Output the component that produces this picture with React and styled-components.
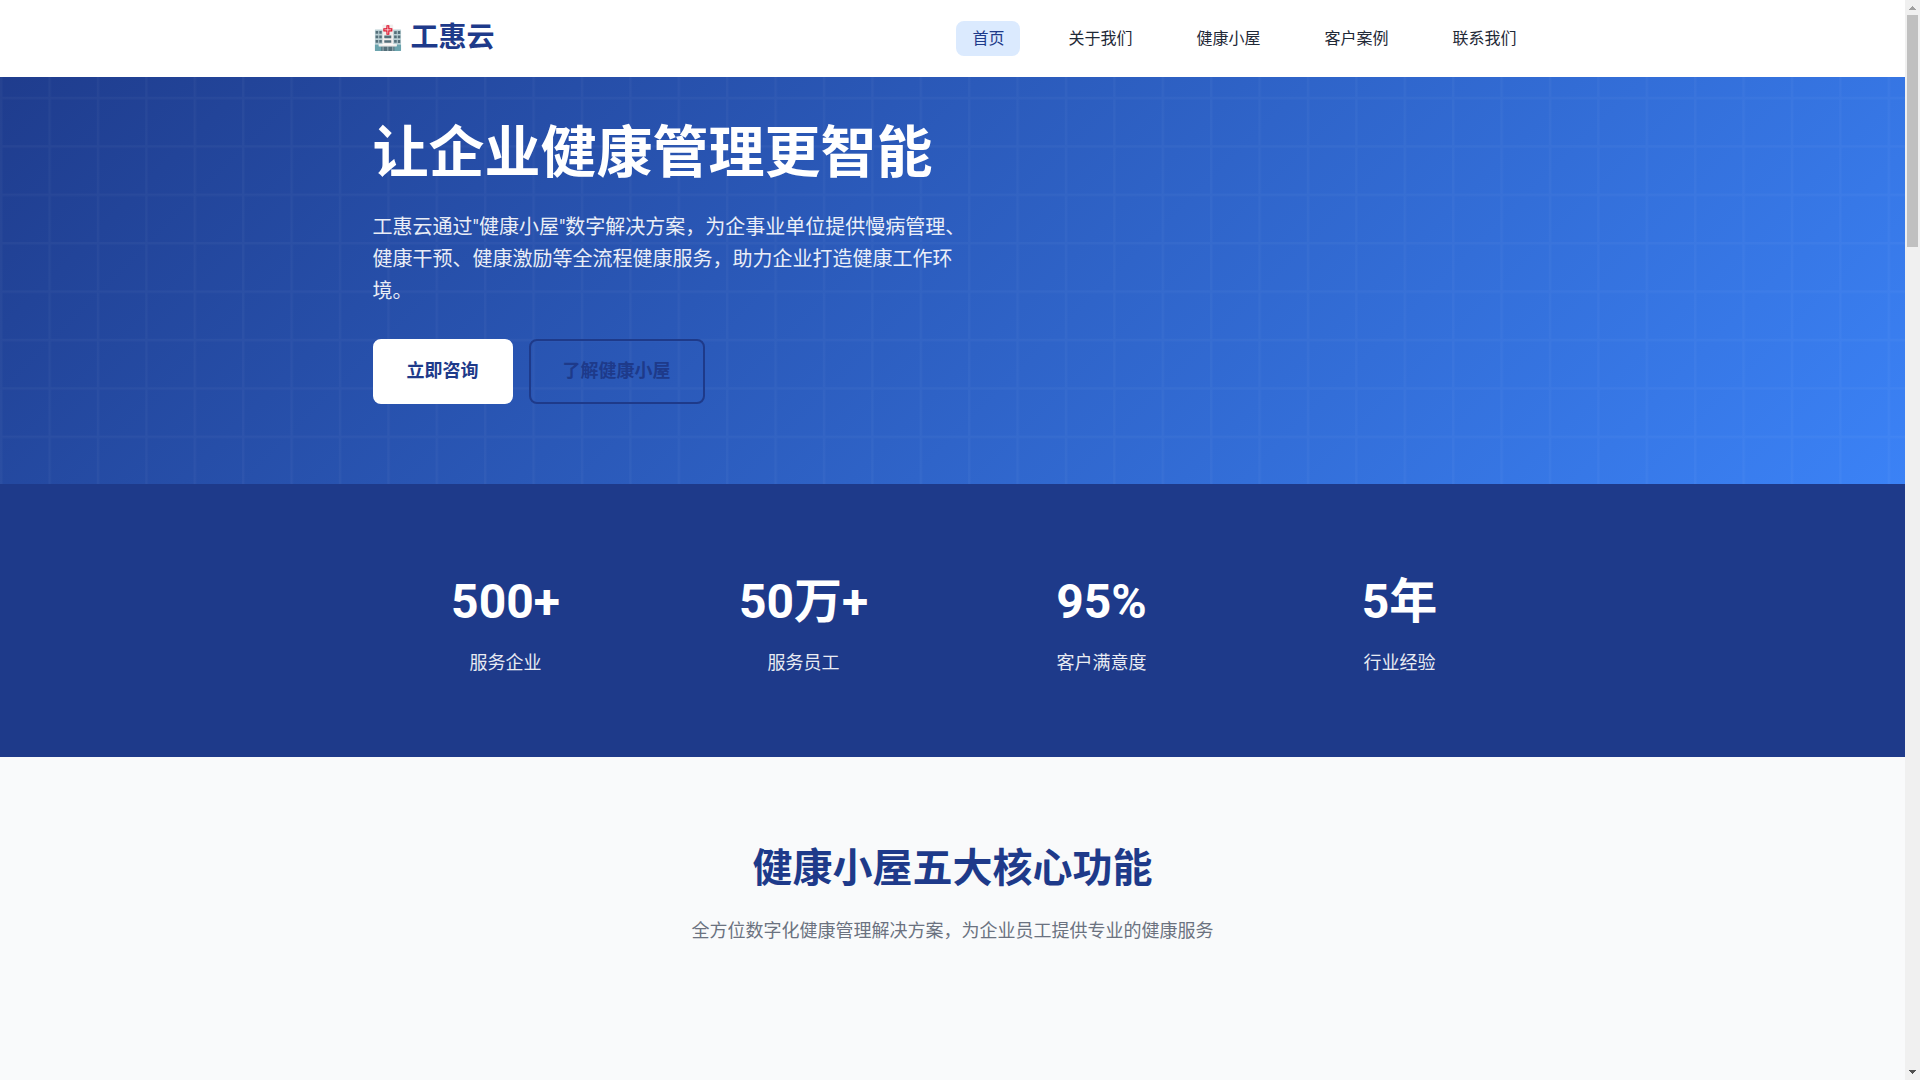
import React from "react";
import styled, { createGlobalStyle, css } from "styled-components";

const GlobalStyle = createGlobalStyle`
  *, *::before, *::after { box-sizing: border-box; }
  body {
    margin: 0;
    font-family: Roboto, "Noto Sans CJK SC", sans-serif;
    font-size: 16px;
    line-height: 1.6;
    color: #1f2937;
    background: #ffffff;
  }
  h1, h2, p, ul, dl, dd { margin: 0; padding: 0; }
`;

const navy = "#1e3a8a";

const gridTile = encodeURIComponent(
  `<svg xmlns="http://www.w3.org/2000/svg" viewBox="0 0 100 100"><defs><pattern id="grid" width="10" height="10" patternUnits="userSpaceOnUse"><path d="M 10 0 L 0 0 0 10" fill="none" stroke="rgba(255,255,255,0.1)" stroke-width="1"/></pattern></defs><rect width="100" height="100" fill="url(#grid)"/></svg>`
);

const Frame = styled.div`
  display: flex;
  min-height: 100vh;
`;

const Page = styled.div`
  flex: 1;
  min-width: 0;
  display: flex;
  flex-direction: column;
`;

const Container = styled.div`
  width: 100%;
  max-width: 1200px;
  margin: 0 auto;
  padding: 0 20px;
`;

const Header = styled.header`
  position: sticky;
  top: 0;
  z-index: 10;
  height: 77px;
  background: #ffffff;
`;

const HeaderRow = styled(Container)`
  height: 100%;
  display: flex;
  align-items: center;
  justify-content: space-between;
`;

const Logo = styled.a`
  display: flex;
  align-items: center;
  gap: 8px;
  font-size: 28px;
  font-weight: 700;
  color: ${navy};
  text-decoration: none;
`;

const LogoIcon = styled.span`
  font-size: 24px;
`;

const NavList = styled.ul`
  display: flex;
  gap: 32px;
  list-style: none;
`;

const NavLink = styled.a`
  padding: 8px 16px;
  border-radius: 8px;
  text-decoration: none;
  color: ${(p) => (p.$active ? navy : "#1f2937")};
  background: ${(p) => (p.$active ? "#dbeafe" : "transparent")};
`;

const Hero = styled.section`
  position: relative;
  margin-top: -77px;
  padding: 120px 0 80px;
  color: #ffffff;
  background: linear-gradient(135deg, ${navy} 0%, #3b82f6 100%);

  &::before {
    content: "";
    position: absolute;
    inset: 0;
    background: url("data:image/svg+xml,${gridTile}");
    opacity: 0.3;
  }
`;

const HeroContent = styled.div`
  position: relative;
  max-width: 600px;
`;

const HeroTitle = styled.h1`
  margin-bottom: 24px;
  font-size: 56px;
  font-weight: 700;
  line-height: 1.2;
`;

const HeroText = styled.p`
  margin-bottom: 32px;
  font-size: 20px;
  opacity: 0.9;
`;

const Actions = styled.div`
  display: flex;
  gap: 16px;
`;

const Button = styled.button`
  padding: 16px 32px;
  border: 2px solid;
  border-radius: 8px;
  font: inherit;
  font-size: 18px;
  font-weight: 600;
  color: ${navy};
  cursor: pointer;
  ${(p) =>
    p.$outline
      ? css`
          border-color: ${navy};
          background: transparent;
        `
      : css`
          border-color: #ffffff;
          background: #ffffff;
        `}
`;

const Stats = styled.section`
  padding: 80px 0;
  color: #ffffff;
  background: ${navy};
`;

const StatsGrid = styled.dl`
  display: grid;
  grid-template-columns: repeat(4, 1fr);
  gap: 32px;
  text-align: center;
`;

const Stat = styled.div`
  display: flex;
  flex-direction: column-reverse;
  gap: 8px;
`;

const StatNumber = styled.dd`
  font-size: 48px;
  font-weight: 700;
`;

const StatLabel = styled.dt`
  font-size: 18px;
  line-height: 28px;
  opacity: 0.9;
`;

const Features = styled.section`
  flex: 1;
  padding: 80px 0;
  text-align: center;
  background: #f9fafb;
`;

const SectionTitle = styled.h2`
  margin-bottom: 16px;
  font-size: 40px;
  font-weight: 700;
  color: ${navy};
`;

const SectionText = styled.p`
  font-size: 18px;
  color: #6b7280;
`;

const ScrollTrack = styled.div`
  position: sticky;
  top: 0;
  width: 15px;
  height: 100vh;
  display: flex;
  flex-direction: column;
  align-items: center;
  background: #f0f0f0;
`;

const ScrollArrow = styled.svg`
  display: block;
  width: 15px;
  height: 15px;
`;

const ScrollRail = styled.div`
  flex: 1;
`;

const ScrollThumb = styled.div`
  width: 11px;
  height: 232px;
  background: #c0c0c0;
`;

const navItems = ["首页", "关于我们", "健康小屋", "客户案例", "联系我们"];

const stats = [
  ["500+", "服务企业"],
  ["50万+", "服务员工"],
  ["95%", "客户满意度"],
  ["5年", "行业经验"],
];

export default function App() {
  return (
    <>
      <GlobalStyle />
      <Frame lang="zh-CN">
        <Page>
          <Header>
            <HeaderRow>
              <Logo href="#home">
                <LogoIcon>🏥</LogoIcon>
                工惠云
              </Logo>
              <nav>
                <NavList>
                  {navItems.map((label, i) => (
                    <li key={label}>
                      <NavLink href={`#nav-${i}`} $active={i === 0}>
                        {label}
                      </NavLink>
                    </li>
                  ))}
                </NavList>
              </nav>
            </HeaderRow>
          </Header>
          <main>
            <Hero>
              <Container>
                <HeroContent>
                  <HeroTitle>让企业健康管理更智能</HeroTitle>
                  <HeroText>
                    工惠云通过"健康小屋"数字解决方案，为企事业单位提供慢病管理、健康干预、健康激励等全流程健康服务，助力企业打造健康工作环境。
                  </HeroText>
                  <Actions>
                    <Button type="button">立即咨询</Button>
                    <Button type="button" $outline>
                      了解健康小屋
                    </Button>
                  </Actions>
                </HeroContent>
              </Container>
            </Hero>
            <Stats>
              <Container>
                <StatsGrid>
                  {stats.map(([value, label]) => (
                    <Stat key={label}>
                      <StatLabel>{label}</StatLabel>
                      <StatNumber>{value}</StatNumber>
                    </Stat>
                  ))}
                </StatsGrid>
              </Container>
            </Stats>
          </main>
          <Features>
            <Container>
              <SectionTitle>健康小屋五大核心功能</SectionTitle>
              <SectionText>
                全方位数字化健康管理解决方案，为企业员工提供专业的健康服务
              </SectionText>
            </Container>
          </Features>
        </Page>
        <ScrollTrack aria-hidden="true">
          <ScrollArrow viewBox="0 0 15 15" shapeRendering="crispEdges">
            <path d="M7 6h1v1h1v1h1v1h1v1H4V9h1V8h1V7h1z" fill="#a0a0a0" />
          </ScrollArrow>
          <ScrollThumb />
          <ScrollRail />
          <ScrollArrow viewBox="0 0 15 15" shapeRendering="crispEdges">
            <path d="M4 5h7v1h-1v1H9v1H8v1H7V8H6V7H5V6H4z" fill="#505050" />
          </ScrollArrow>
        </ScrollTrack>
      </Frame>
    </>
  );
}
